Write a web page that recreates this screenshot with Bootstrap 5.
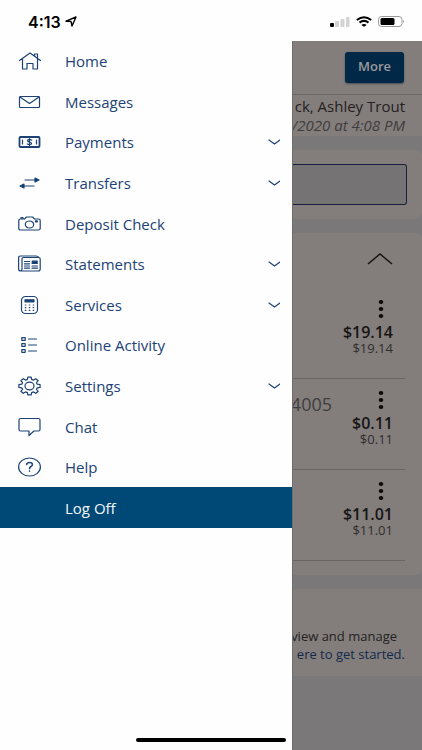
<!DOCTYPE html>
<html lang="en">
<head>
<meta charset="utf-8">
<meta name="viewport" content="width=device-width, initial-scale=1">
<title>Accounts</title>
<link href="https://cdn.jsdelivr.net/npm/bootstrap@5.3.0/dist/css/bootstrap.min.css" rel="stylesheet">
<style>
  body { font-family: "Open Sans", "Noto Sans", sans-serif; font-size: 15px; line-height: 20px; background: #fefefe; }
  svg { display: block; flex: none; }
  .status-bar { height: 41px; padding: 2px 17px 0 28px; color: #000; }
  .clock { font-family: Inter, "Liberation Sans", sans-serif; font-size: 16px; font-weight: 600; }
  .signals { gap: 6px; }
  .drawer { width: 292px; flex: none; background: #fefefe; }
  .menu { display: grid; grid-auto-rows: 1fr; height: 487px; }
  .menu-item { display: flex; align-items: center; width: 100%; height: 100%; padding: 0 12px 0 18px; border: 0; background: none; color: #1c4276; text-decoration: none; text-align: left; }
  .menu-item span { flex: 1; margin-left: 23px; }
  .menu-item svg { fill: none; stroke: #1c4276; stroke-width: 1.2; stroke-linejoin: round; stroke-linecap: round; }
  .menu-item .solid { fill: #003f75; }
  .menu-item.log-off { background: #004876; color: #f4f8fb; padding-left: 42px; }
  .backdrop-page { background: #7a7879; color: #242122; min-width: 0; overflow: hidden; border-left: 1px solid #6f6d6e; }
  .panel { background: #837e7c; }
  .clip-line { display: flex; justify-content: flex-end; white-space: nowrap; }
  .top-strip { height: 54px; padding-right: 18px; border-bottom: 1px solid #6a6667; }
  .more-btn { width: 59px; height: 31px; padding: 0 0 3px; border: 0; border-radius: 3px; background: #012947; color: #9c9a9c; font-size: 13px; font-weight: 600; box-shadow: 0 1px 2px #4a4a50; }
  .greeting { height: 41px; padding: 1px 17px 0 0; }
  .visit { font-style: italic; line-height: 18px; color: #403d3e; }
  .search-panel { margin-top: 14px; padding: 14px 15px 14px 0; border-radius: 0 6px 6px 0; }
  .search-box { width: 100%; height: 41px; border: 1px solid #1a1e3e; border-left: 0; border-radius: 0 3px 3px 0; background: #757374; }
  .accounts { margin-top: 14px; padding: 0 17px 14px 0; border-radius: 0 6px 6px 0; }
  .collapse-btn { height: 55px; padding: 0 12px 4px 0; border: 0; background: none; }
  .account { height: 91px; padding-top: 11px; border-bottom: 1px solid #696566; }
  .acct-no { font-size: 18px; padding: 4px 20px 0 0; color: #403d3e; }
  .amounts { padding-right: 12px; text-align: right; }
  .kebab { padding: 0 9px 0 0; border: 0; background: none; }
  .amount { font-size: 16px; font-weight: 600; line-height: 18px; margin-top: 4px; color: #161415; }
  .available { font-size: 13px; line-height: 14px; color: #302d2e; }
  .promo { margin-top: 14px; height: 87px; padding: 38px 17px 0 0; font-size: 13px; line-height: 18px; }
  .promo a { color: #12294a; text-decoration: none; }
  .home-bar { width: 150px; height: 4px; bottom: 8px; border-radius: 2px; background: #000; }
</style>
<script src="https://cdn.jsdelivr.net/npm/bootstrap@5.3.0/dist/js/bootstrap.bundle.min.js"></script>
</head>
<body>
<div class="min-vh-100 d-flex flex-column position-relative overflow-hidden">
  <header class="status-bar d-flex align-items-center justify-content-between">
    <div class="d-flex align-items-center gap-1">
      <span class="clock">4:13</span>
      <svg width="12" height="11" viewBox="0 0 12 11" fill="none" stroke="#000" stroke-width="1.4" stroke-linejoin="round"><path d="M1 5.2 11 1 7 10 6 5.4Z"/></svg>
    </div>
    <div class="signals d-flex align-items-center">
      <svg width="20" height="11" viewBox="0 0 20 11"><rect x="0" y="7" width="4" height="4" rx="1"/><g fill="#d3d3d3"><rect x="5" y="5" width="4" height="6" rx="1"/><rect x="10.500" y="3" width="4" height="8" rx="1"/><rect x="16" y="1" width="3.500" height="10" rx="1"/></g></svg>
      <svg width="16" height="11" viewBox="0 0 16 11" fill="none" stroke="#000" stroke-width="2"><path d="M.8 4Q8-1.600 15.200 4M3.500 6.600Q8 3.200 12.500 6.600"/><path d="M8 10.800 5.300 8.900Q8 7 10.700 8.900Z" fill="#000" stroke="none"/></svg>
      <svg width="27" height="11" viewBox="0 0 27 11"><rect x=".5" y=".5" width="23.500" height="10" rx="3" fill="none" stroke="#999"/><rect x="2.500" y="2" width="14" height="7" rx="1.500"/><path d="M25.300 3.800Q27 5.500 25.300 7.200Z" fill="#777"/></svg>
    </div>
  </header>

  <div class="d-flex flex-fill">
    <aside class="drawer">
      <nav class="menu" aria-label="Main">
        <a class="menu-item" href="#home"><svg width="24" height="20" viewBox="0 0 24 20"><path d="M1.500 9.500 12 2 22.500 9.500M4.500 7.700V18H9V12.500H15V18H19.500V7.700M16.500 5V3H19.500V7"/></svg><span>Home</span></a>
        <a class="menu-item" href="#messages"><svg width="24" height="20" viewBox="0 0 24 20"><rect x="1.500" y="4.500" width="20" height="11" rx="1"/><path d="M2 5 11.500 11.500 21 5"/></svg><span>Messages</span></a>
        <button type="button" class="menu-item"><svg width="24" height="20" viewBox="0 0 24 20"><rect x="1.500" y="5" width="20" height="10" rx="1" stroke-width="1.800"/><path d="M4.500 8V12M18.500 8V12"/><path d="M13.700 8.200Q11.500 6.800 9.800 8.100 8.900 9.400 11.500 10 14.200 10.600 13.300 12 11.500 13.300 9.300 11.900M11.500 6.500V13.500" stroke-width="1.200"/></svg><span>Payments</span><svg width="12" height="8" viewBox="0 0 12 8"><path d="M1 2 6.500 6 12 2"/></svg></button>
        <button type="button" class="menu-item"><svg width="24" height="20" viewBox="0 0 24 20"><path d="M7 7H18M5 13H16"/><path class="solid" d="M17 5 21 7 17 9ZM6 11 2 13 6 15Z"/></svg><span>Transfers</span><svg width="12" height="8" viewBox="0 0 12 8"><path d="M1 2 6.500 6 12 2"/></svg></button>
        <a class="menu-item" href="#deposit"><svg width="24" height="20" viewBox="0 0 24 20"><path d="M2.500 5H6.500L8.500 3H14.500L16.500 5H20.500Q22.200 5 22.200 6.500V14.500Q22.200 16 20.500 16H2.500Q.8 16 .8 14.500V6.500Q.8 5 2.500 5ZM3 4.700V3.700H5V4.700"/><ellipse cx="11.500" cy="10.500" rx="4.200" ry="3.500"/><rect x="17.500" y="6.800" width="1.800" height="1" class="solid"/></svg><span>Deposit Check</span></a>
        <button type="button" class="menu-item"><svg width="24" height="20" viewBox="0 0 24 20"><path d="M4 4.500Q4 3.500 5.500 3.500H20.500Q22.200 3.500 22.200 5V15Q22.200 17 20 17H3Q.6 17 .6 15V4Q.6 2 2.500 2H18Q20 2 20.500 3.300M4 4.500V15Q4 17 2.500 17"/><path d="M6.500 7.500H11.500M6.500 9.800H11.500M6.500 12H11.500M6.500 14.200H11.500M14 12H19.500M14 14.200H19.500"/><rect class="solid" x="14.200" y="7.200" width="5" height="2.200"/></svg><span>Statements</span><svg width="12" height="8" viewBox="0 0 12 8"><path d="M1 2 6.500 6 12 2"/></svg></button>
        <button type="button" class="menu-item"><svg width="24" height="20" viewBox="0 0 24 20"><rect x="3.500" y="1.500" width="16" height="17" rx="4"/><rect class="solid" x="7" y="4.800" width="9" height="2" /><path d="M7.300 10H7.800M11.300 10H11.800M15.200 10H15.700M7.300 12.700H7.800M11.300 12.700H11.800M15.200 12.700H15.700M7.300 15.400H7.800M11.300 15.400H11.800M15.200 15.400H15.700"/></svg><span>Services</span><svg width="12" height="8" viewBox="0 0 12 8"><path d="M1 2 6.500 6 12 2"/></svg></button>
        <a class="menu-item" href="#activity"><svg width="24" height="20" viewBox="0 0 24 20"><path d="M3.800 2.700H7.200V5.300H3.800ZM3.800 8.700H7.200V11.300H3.800ZM3.800 14.700H7.200V17.300H3.800ZM10.500 4H18.500M10.500 10H18.500M10.500 16H18.500"/></svg><span>Online Activity</span></a>
        <button type="button" class="menu-item"><svg width="24" height="20" viewBox="0 0 24 20"><path transform="translate(11.500 10)" d="M7.700-1.800 10.600-1.400V1.400L7.700 1.800 6.900 3.400 8.700 5.300 6.300 7.300 4 5.900 2.100 6.600 1.700 8.900H-1.700L-2.100 6.600-4 5.900-6.300 7.300-8.700 5.300-6.900 3.400-7.700 1.800-10.600 1.400V-1.400L-7.700-1.800-6.900-3.400-8.700-5.300-6.300-7.300-4-5.900-2.100-6.600-1.700-8.900H1.700L2.100-6.600 4-5.900 6.300-7.300 8.700-5.300 6.900-3.400Z"/><ellipse cx="11.500" cy="10" rx="4.500" ry="3.800"/></svg><span>Settings</span><svg width="12" height="8" viewBox="0 0 12 8"><path d="M1 2 6.500 6 12 2"/></svg></button>
        <a class="menu-item" href="#chat"><svg width="24" height="20" viewBox="0 0 24 20"><path d="M2.500 1.500H20.500Q22 1.500 22 3V12.500Q22 14 20.500 14H16L11 18.500V14H2.500Q1 14 1 12.500V3Q1 1.500 2.500 1.500Z"/></svg><span>Chat</span></a>
        <a class="menu-item" href="#help"><svg width="24" height="20" viewBox="0 0 24 20"><ellipse cx="11.500" cy="10" rx="10.900" ry="9"/><path d="M8.600 7.500Q9 5.500 11.500 5.500 14.400 5.500 14.400 7.600 14.400 8.700 13 9.500 11.500 10.300 11.500 11.700M11.500 14V14.300" stroke-width="1.500"/></svg><span>Help</span></a>
        <a class="menu-item log-off" href="#logoff"><span>Log Off</span></a>
      </nav>
    </aside>

    <main class="backdrop-page flex-fill">
      <div class="panel top-strip d-flex align-items-center justify-content-end">
        <button type="button" class="more-btn">More</button>
      </div>
      <div class="panel greeting">
        <div class="clip-line">ck, Ashley Trout</div>
        <div class="clip-line visit">/2020 at 4:08 PM</div>
      </div>
      <div class="panel search-panel">
        <input class="search-box d-block" type="text" aria-label="Search">
      </div>
      <section class="panel accounts">
        <div class="d-flex justify-content-end">
          <button type="button" class="collapse-btn" aria-label="Collapse accounts"><svg width="26" height="12" viewBox="0 0 26 12" fill="none" stroke="#141213" stroke-width="1.500"><path d="M1 11 13 1 25 11"/></svg></button>
        </div>
        <div class="account d-flex justify-content-end">
          <div class="amounts">
            <button type="button" class="kebab d-block ms-auto" aria-label="Account options"><svg width="6" height="20" viewBox="0 0 6 20" fill="#0c0a0b"><ellipse cx="3" cy="3" rx="2.300" ry="2"/><ellipse cx="3" cy="10" rx="2.300" ry="2"/><ellipse cx="3" cy="17" rx="2.300" ry="2"/></svg></button>
            <div class="amount">$19.14</div><div class="available">$19.14</div>
          </div>
        </div>
        <div class="account d-flex justify-content-end">
          <div class="acct-no">4005</div>
          <div class="amounts">
            <button type="button" class="kebab d-block ms-auto" aria-label="Account options"><svg width="6" height="20" viewBox="0 0 6 20" fill="#0c0a0b"><ellipse cx="3" cy="3" rx="2.300" ry="2"/><ellipse cx="3" cy="10" rx="2.300" ry="2"/><ellipse cx="3" cy="17" rx="2.300" ry="2"/></svg></button>
            <div class="amount">$0.11</div><div class="available">$0.11</div>
          </div>
        </div>
        <div class="account d-flex justify-content-end">
          <div class="amounts">
            <button type="button" class="kebab d-block ms-auto" aria-label="Account options"><svg width="6" height="20" viewBox="0 0 6 20" fill="#0c0a0b"><ellipse cx="3" cy="3" rx="2.300" ry="2"/><ellipse cx="3" cy="10" rx="2.300" ry="2"/><ellipse cx="3" cy="17" rx="2.300" ry="2"/></svg></button>
            <div class="amount">$11.01</div><div class="available">$11.01</div>
          </div>
        </div>
      </section>
      <div class="panel promo">
        <div class="clip-line pe-2">view and manage</div>
        <div class="clip-line"><a href="#start">ere to get started</a>.</div>
      </div>
    </main>
  </div>
  <div class="home-bar position-absolute start-50 translate-middle-x"></div>
</div>
</body>
</html>
